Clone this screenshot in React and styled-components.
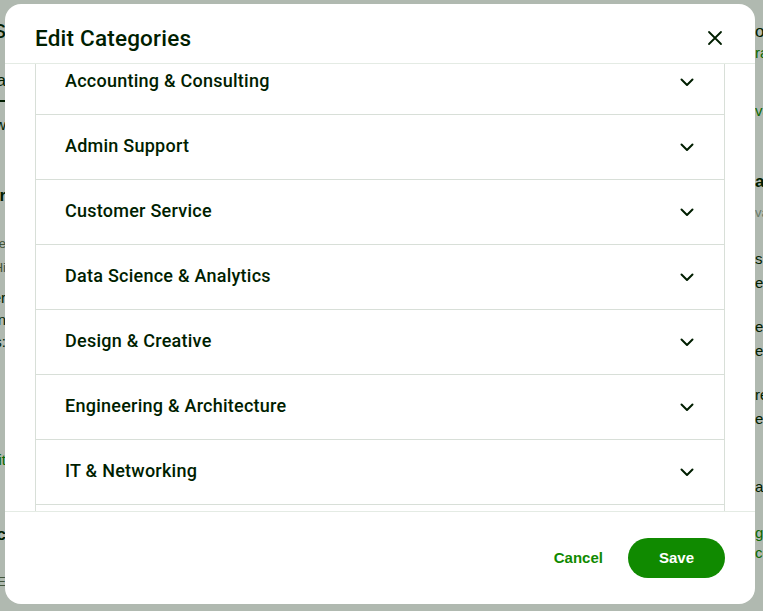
import React from 'react';
import styled, { createGlobalStyle } from 'styled-components';

const GlobalStyle = createGlobalStyle`
  html, body {
    margin: 0;
    padding: 0;
    height: 100%;
  }
  body {
    font-family: "Liberation Sans", Arial, sans-serif;
    color: #001e00;
    overflow: hidden;
  }
`;

const categories = [
  'Accounting & Consulting',
  'Admin Support',
  'Customer Service',
  'Data Science & Analytics',
  'Design & Creative',
  'Engineering & Architecture',
  'IT & Networking',
  'Legal',
];

// fragments of the page behind the overlay: [text, top margin, size, colour, weight]
const leftBits = [
  ['Skills', 14, 26, '#001e00', 500],
  ['Data', 26, 17, '#001e00', 400, true],
  ['View', 14, 15, '#001e00', 400],
  ['Categor', 52, 17, '#001e00', 700],
  ['Profile', 30, 13, '#5e6d55', 400],
  ['Hi', 8, 13, '#5e6d55', 400],
  ['Member', 14, 15, '#001e00', 400],
  ['Section', 4, 15, '#001e00', 400],
  ['Areas:', 4, 15, '#001e00', 400],
  ['Edit', 100, 15, '#108a00', 500],
  ['Doc', 56, 17, '#001e00', 700],
  ['RE', 28, 13, '#5e6d55', 400],
];

const rightBits = [
  ['on', 22, 17, '#001e00', 400],
  ['rate', 2, 15, '#108a00', 500],
  ['vail', 40, 15, '#108a00', 500],
  ['able', 52, 17, '#001e00', 700],
  ['vail', 12, 13, '#9aa69a', 400],
  ['s per', 30, 15, '#001e00', 400],
  ['eeks', 6, 15, '#001e00', 400],
  ['es', 26, 15, '#001e00', 400],
  ['eek', 6, 15, '#001e00', 400],
  ['red', 26, 15, '#001e00', 400],
  ['ekly', 6, 15, '#001e00', 400],
  ['ate', 50, 15, '#001e00', 400],
  ['go', 28, 15, '#108a00', 500],
  ['cess', 2, 15, '#108a00', 500],
];

const Page = styled.div`
  position: relative;
  width: 763px;
  height: 611px;
  background: #ffffff;
  display: flex;
  justify-content: space-between;
  overflow: hidden;
`;

const SideColumn = styled.div`
  width: ${(p) => p.width}px;
  overflow: hidden;
  display: flex;
  flex-direction: column;
  align-items: ${(p) => (p.side === 'left' ? 'flex-end' : 'flex-start')};
`;

const Bit = styled.div`
  white-space: nowrap;
  margin-top: ${(p) => p.top}px;
  font-size: ${(p) => p.size}px;
  line-height: 1.2;
  color: ${(p) => p.color};
  font-weight: ${(p) => p.weight};
  border-bottom: ${(p) => (p.underline ? '2px solid #001e00' : 'none')};
  padding-bottom: ${(p) => (p.underline ? '8px' : '0')};
`;

const Overlay = styled.div`
  position: absolute;
  inset: 0;
  background: rgba(0, 30, 0, 0.31);
  display: flex;
  align-items: flex-start;
  justify-content: flex-start;
  padding: 4px 0 0 5px;
`;

const Modal = styled.div`
  width: 750px;
  height: 600px;
  background: #ffffff;
  border-radius: 16px;
  display: flex;
  flex-direction: column;
  overflow: hidden;
`;

const Header = styled.div`
  height: 59px;
  flex-shrink: 0;
  border-bottom: 1px solid #e4ebe4;
  display: flex;
  align-items: center;
  justify-content: space-between;
  padding: 0 28px 0 30px;
`;

const Title = styled.h2`
  margin: 0;
  font-family: "Roboto", "Liberation Sans", sans-serif;
  font-size: 22.5px;
  font-weight: 500;
  letter-spacing: 0.2px;
  color: #001e00;
  padding-top: 9px;
`;

const IconButton = styled.button`
  background: none;
  border: none;
  padding: 0;
  width: 24px;
  height: 24px;
  display: flex;
  align-items: center;
  justify-content: center;
  color: #001e00;
  cursor: pointer;
  margin-top: 9px;
`;

const Body = styled.div`
  flex: 1;
  overflow: hidden;
  padding: 0 30px;
`;

const List = styled.div`
  margin-top: -14px;
  border-left: 1px solid #d8dfd8;
  border-right: 1px solid #d8dfd8;
`;

const Row = styled.div`
  height: 64px;
  border-bottom: 1px solid #d8dfd8;
  display: flex;
  align-items: center;
  justify-content: space-between;
  padding: 0 30px 0 29px;
  cursor: pointer;
`;

const RowLabel = styled.span`
  font-family: "Roboto", "Liberation Sans", sans-serif;
  font-size: 18px;
  font-weight: 500;
  letter-spacing: 0.25px;
  color: #001e00;
  padding-bottom: 3px;
`;

const Footer = styled.div`
  height: 92px;
  flex-shrink: 0;
  border-top: 1px solid #e4ebe4;
  display: flex;
  align-items: center;
  justify-content: flex-end;
  gap: 4px;
  padding: 0 30px;
`;

const TextButton = styled.button`
  background: none;
  border: none;
  font-family: "Liberation Sans", Arial, sans-serif;
  font-weight: 700;
  font-size: 15px;
  color: ${(p) => (p.primary ? '#ffffff' : '#108a00')};
  background: ${(p) => (p.primary ? '#108a00' : 'transparent')};
  height: 40px;
  padding: ${(p) => (p.primary ? '0 31px 2px' : '0 21px 2px')};
  border-radius: 20px;
  cursor: pointer;
`;

const CloseIcon = () => (
  <svg width="16" height="16" viewBox="0 0 16 16" fill="none" stroke="currentColor" strokeWidth="1.8" strokeLinecap="round">
    <path d="M2 2 L14 14 M14 2 L2 14" />
  </svg>
);

const Chevron = () => (
  <svg width="14" height="9" viewBox="0 0 14 9" fill="none" stroke="#001e00" strokeWidth="2" strokeLinecap="round" strokeLinejoin="round">
    <path d="M1.5 1.5 L7 7 L12.5 1.5" />
  </svg>
);

function SideBits({ bits, side, width }) {
  return (
    <SideColumn side={side} width={width}>
      {bits.map(([text, top, size, color, weight, underline], i) => (
        <Bit key={i} top={top} size={size} color={color} weight={weight} underline={underline}>
          {text}
        </Bit>
      ))}
    </SideColumn>
  );
}

export default function App() {
  return (
    <>
      <GlobalStyle />
      <Page>
        <SideBits bits={leftBits} side="left" width={6} />
        <SideBits bits={rightBits} side="right" width={8} />
        <Overlay>
          <Modal>
            <Header>
              <Title>Edit Categories</Title>
              <IconButton aria-label="Close">
                <CloseIcon />
              </IconButton>
            </Header>
            <Body>
              <List>
                {categories.map((c) => (
                  <Row key={c}>
                    <RowLabel>{c}</RowLabel>
                    <Chevron />
                  </Row>
                ))}
              </List>
            </Body>
            <Footer>
              <TextButton>Cancel</TextButton>
              <TextButton primary>Save</TextButton>
            </Footer>
          </Modal>
        </Overlay>
      </Page>
    </>
  );
}
